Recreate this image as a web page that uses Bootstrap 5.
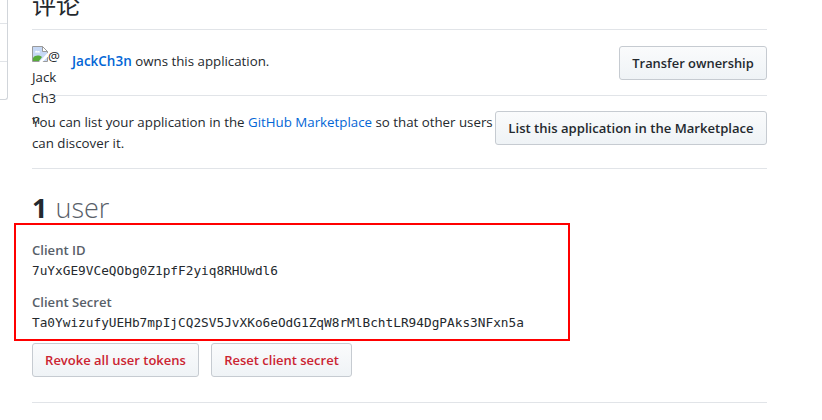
<!DOCTYPE html>
<html lang="en">
<head>
<meta charset="utf-8">
<title>OAuth application</title>
<link href="https://cdn.jsdelivr.net/npm/bootstrap@5.3.0/dist/css/bootstrap.min.css" rel="stylesheet">
<style>
body{font:14px/21px "Open Sans","Noto Sans CJK SC",sans-serif;color:#24292e;background:#fff;height:420px;overflow:hidden}
a{color:#0366d6;text-decoration:none}
.side-menu{width:8px;height:100px;border:1px solid #d1d5da;border-width:0 1px 1px 0;border-radius:0 0 3px 0}
.side-menu div{border-bottom:1px solid #e1e4e8}
.side-menu div:nth-child(1){height:24px}
.side-menu div:nth-child(2){height:38px}
.main-col{width:735px;margin-left:24px}
.section{border-bottom:1px solid #e1e4e8}
.title-sec{height:30px;display:flow-root}
.title-sec h2{font:400 24px/36px "Noto Sans CJK SC",sans-serif;margin:-14px 0 0}
.owner-sec{height:66px;padding-top:16px}
.market-sec{height:73px;padding-top:15px}
.client-sec{height:234px;padding-top:21px}
.avatar{width:30px;height:40px;margin-right:10px;font-size:13.3px;line-height:21px}
.avatar svg{display:inline-block;vertical-align:top}
.txt{font-size:13.3px;white-space:nowrap}
.owner-text{padding-top:5px}
.owner-text a{font-size:13.5px}
.market-text{padding-top:1px}
.btn-gh{height:34px;padding:0 12px;border:1px solid #c6cbd1;border-radius:3px;background:linear-gradient(#fafbfc,#eff3f6);font-size:13px;font-weight:600;line-height:30px;color:#24292e;white-space:nowrap}
.btn-transfer{font-size:12.9px;width:148px}
.btn-list{font-size:13.1px;width:272px;padding:0}
.btn-revoke{width:167px}
.btn-reset{width:141px}
.btn-red{color:#cb2431}
.users{font-size:27px;line-height:36px;margin:0;font-weight:300;color:#586069}
.users b{font-weight:700;color:#24292e;margin-right:1px}
.keys{margin:14px 0 0}
.keys dt{font-size:13.1px;font-weight:600;color:#586069;line-height:20px}
.keys dd{font:12.78px/21px "DejaVu Sans Mono",monospace;margin:0 0 11px;white-space:nowrap}
.keys dd:last-child{margin-bottom:10px}
.highlight-box{left:14px;top:223px;width:556px;height:118px;border:2px solid #f00}
</style>
<script src="https://cdn.jsdelivr.net/npm/bootstrap@5.3.0/dist/js/bootstrap.bundle.min.js"></script>
</head>
<body class="position-relative">
<div class="d-flex align-items-start">
  <nav class="side-menu flex-shrink-0"><div></div><div></div></nav>
  <main class="main-col flex-shrink-0">
    <section class="section title-sec"><h2>评论</h2></section>
    <section class="section owner-sec d-flex align-items-start">
      <div class="avatar flex-shrink-0"><svg width="16" height="16" viewBox="0 0 16 16"><path d="M.5.5h10l5 5V15.500H.5z" fill="#c6d8f5" stroke="#9a9a9a"/><path d="M10.5.5v5h5z" fill="#fff" stroke="#9a9a9a"/><path d="M3 6.5c0-2 2-2 2.5-1C7 4.500 8 5.500 8 6.500z" fill="#fff"/><path d="M1 15v-3c2-3 6-3 9-1l-3 4z" fill="#57ab3a"/><path d="M16 6.500v4L10.500 16H7z" fill="#fff"/></svg>@<br>Jack<br>Ch3<br>n</div>
      <div class="txt owner-text"><a href="#" class="fw-semibold">JackCh3n</a> owns this application.</div>
      <button class="btn btn-gh btn-transfer ms-auto">Transfer ownership</button>
    </section>
    <section class="section market-sec d-flex align-items-start">
      <div class="txt market-text">You can list your application in the <a href="#">GitHub Marketplace</a> so that other users<br>can discover it.</div>
      <button class="btn btn-gh btn-list ms-auto">List this application in the Marketplace</button>
    </section>
    <section class="section client-sec">
      <h3 class="users"><b>1</b> user</h3>
      <dl class="keys">
        <dt>Client ID</dt><dd>7uYxGE9VCeQObg0Z1pfF2yiq8RHUwdl6</dd>
        <dt>Client Secret</dt><dd>Ta0YwizufyUEHb7mpIjCQ2SV5JvXKo6eOdG1ZqW8rMlBchtLR94DgPAks3NFxn5a</dd>
      </dl>
      <div class="d-flex">
        <button class="btn btn-gh btn-red btn-revoke me-2">Revoke all user tokens</button>
        <button class="btn btn-gh btn-red btn-reset ms-1">Reset client secret</button>
      </div>
    </section>
  </main>
</div>
<div class="highlight-box position-absolute"></div>
</body>
</html>
